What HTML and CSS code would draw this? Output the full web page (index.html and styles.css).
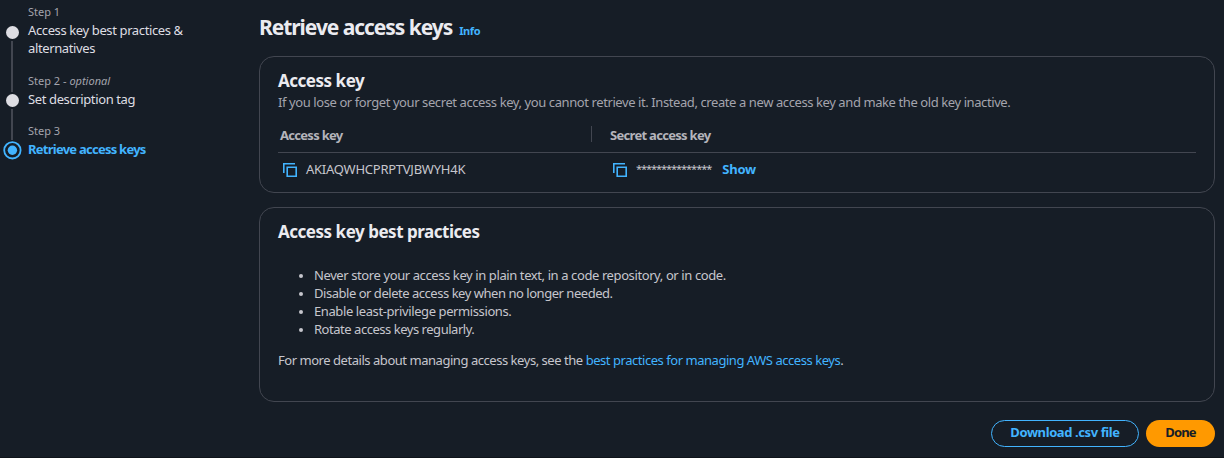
FILE: index.html
```html
<!DOCTYPE html>
<html lang="en">
<head>
<meta charset="utf-8">
<title>Retrieve access keys</title>
<link rel="stylesheet" href="styles.css">
</head>
<body>
<div class="page">
  <nav class="steps">
    <div class="step step-first">
      <div class="track"><span class="dot"></span><span class="line"></span></div>
      <div class="step-text"><div class="step-label">Step 1</div><div class="step-name">Access key best practices &amp;<br>alternatives</div></div>
    </div>
    <div class="step step-second">
      <div class="track"><span class="dot"></span><span class="line"></span></div>
      <div class="step-text"><div class="step-label">Step 2 - <i>optional</i></div><div class="step-name">Set description tag</div></div>
    </div>
    <div class="step step-current">
      <div class="track"><svg class="current-dot" width="20" height="20" viewBox="0 0 20 20"><circle cx="10.4" cy="10.3" r="8.2" fill="none" stroke="#42b4ff" stroke-width="1.8"/><circle cx="10.4" cy="10.3" r="4.7" fill="#42b4ff"/></svg></div>
      <div class="step-text"><div class="step-label">Step 3</div><div class="step-name">Retrieve access keys</div></div>
    </div>
  </nav>
  <main class="main">
    <header class="title-row"><h1>Retrieve access keys</h1><a class="info">Info</a></header>
    <section class="card keys">
      <h2>Access key</h2>
      <p class="desc">If you lose or forget your secret access key, you cannot retrieve it. Instead, create a new access key and make the old key inactive.</p>
      <div class="grid head">
        <div class="cell-a">Access key</div>
        <div class="cell-b">Secret access key</div>
      </div>
      <div class="grid values">
        <div class="value"><svg class="copy" width="16" height="16" viewBox="0 0 16 16" fill="none" stroke="#42b4ff" stroke-width="1.6"><path d="M1.8 11V1.8H13"/><path d="M5.2 5.2h9v9h-9z"/></svg><span class="key-id">AKIAQWHCPRPTVJBWYH4K</span></div>
        <div class="value"><svg class="copy" width="16" height="16" viewBox="0 0 16 16" fill="none" stroke="#42b4ff" stroke-width="1.6"><path d="M1.8 11V1.8H13"/><path d="M5.2 5.2h9v9h-9z"/></svg><span class="stars">***************</span><a class="show">Show</a></div>
      </div>
    </section>
    <section class="card practices">
      <h2>Access key best practices</h2>
      <ul>
        <li>Never store your access key in plain text, in a code repository, or in code.</li>
        <li class="tight">Disable or delete access key when no longer needed.</li>
        <li>Enable least-privilege permissions.</li>
        <li class="tight">Rotate access keys regularly.</li>
      </ul>
      <p class="more">For more details about managing access keys, see the <a>best practices for managing AWS access keys</a>.</p>
    </section>
    <footer class="actions"><button class="btn download">Download .csv file</button><button class="btn done">Done</button></footer>
  </main>
</div>
</body>
</html>
```
FILE: styles.css
```css
* { box-sizing: border-box; }
body { margin: 0; background: #161d26; color: #c6c6cd; font: 13px/18px "Noto Sans", "Open Sans", sans-serif; letter-spacing: -0.4px; white-space: nowrap; }
.page { display: flex; height: 458px; overflow: hidden; border-bottom: 1px solid #0f141a; }
.steps { width: 259px; padding-top: 3px; }
.step { display: flex; }
.step-first { height: 69px; }
.step-second { height: 50px; }
.track { width: 28px; padding: 23px 0 0 6px; display: flex; flex-direction: column; }
.step-current .track { padding: 18px 0 0 2px; }
.dot { width: 13px; height: 13px; border-radius: 50%; background: #dedee3; flex: none; }
.line { width: 2px; margin-left: 5px; margin-top: 2px; background: #424650; height: 51px; flex: none; }
.step-second .line { height: 31px; }
.step-second .track { padding-top: 22px; }
.step-label { font-size: 11px; letter-spacing: 0; color: #a4a4ad; }
.step-name { color: #dedee3; letter-spacing: -0.38px; }
.step-current .step-name { color: #42b4ff; font-weight: 700; letter-spacing: -0.75px; }
.main { width: 956px; padding-top: 15px; }
.title-row { display: flex; align-items: baseline; gap: 7px; height: 41px; }
h1 { margin: 0; font-size: 21px; line-height: 25px; color: #ebebf0; letter-spacing: -1.05px; }
h2 { margin: 0; font-size: 17px; line-height: 22px; color: #ebebf0; letter-spacing: -0.48px; }
a { color: #42b4ff; }
.info { font-size: 11px; font-weight: 700; }
.card { border: 1px solid #424650; border-radius: 15px; padding: 13px 18px 0; }
.keys { height: 137px; }
.desc { margin: 1px 0 0; color: #a4a4ad; letter-spacing: -0.41px; }
.grid { display: grid; grid-template-columns: 314px 1fr; }
.head { margin-top: 12px; height: 30px; border-bottom: 1px solid #424650; padding-top: 3px; font-weight: 700; color: #b4b4bb; letter-spacing: -0.7px; }
.cell-a { padding-left: 2px; border-right: 1px solid #424650; height: 16px; }
.cell-b { padding-left: 18px; }
.values { margin-top: 8px; grid-template-columns: 330px 1fr; }
.value { display: flex; align-items: center; height: 18px; padding-left: 4px; }
.value span, .value a { padding-bottom: 2px; }
.copy { margin-right: 8px; }
.key-id { letter-spacing: -0.25px; }
.stars { font-size: 11px; letter-spacing: -1.05px; }
.show { margin-left: 11px; font-weight: 700; letter-spacing: -0.2px; }
.practices { margin-top: 14px; height: 195px; }
ul { margin: 23px 0 0; padding-left: 36px; }
li::marker { font-size: 11px; }
.tight { letter-spacing: -0.47px; }
.more { margin: 13px 0 0; letter-spacing: -0.46px; }
.actions { display: flex; justify-content: flex-end; gap: 7px; margin-top: 18px; }
.btn { height: 27px; border-radius: 14px; padding: 0 0 3px; font: 700 13px/18px "Noto Sans", "Open Sans", sans-serif; letter-spacing: -0.4px; }
.download { width: 148px; border: 1px solid #42b4ff; background: transparent; color: #42b4ff; }
.done { width: 69px; border: 0; background: #ff9900; color: #161d26; letter-spacing: -0.8px; }
```
